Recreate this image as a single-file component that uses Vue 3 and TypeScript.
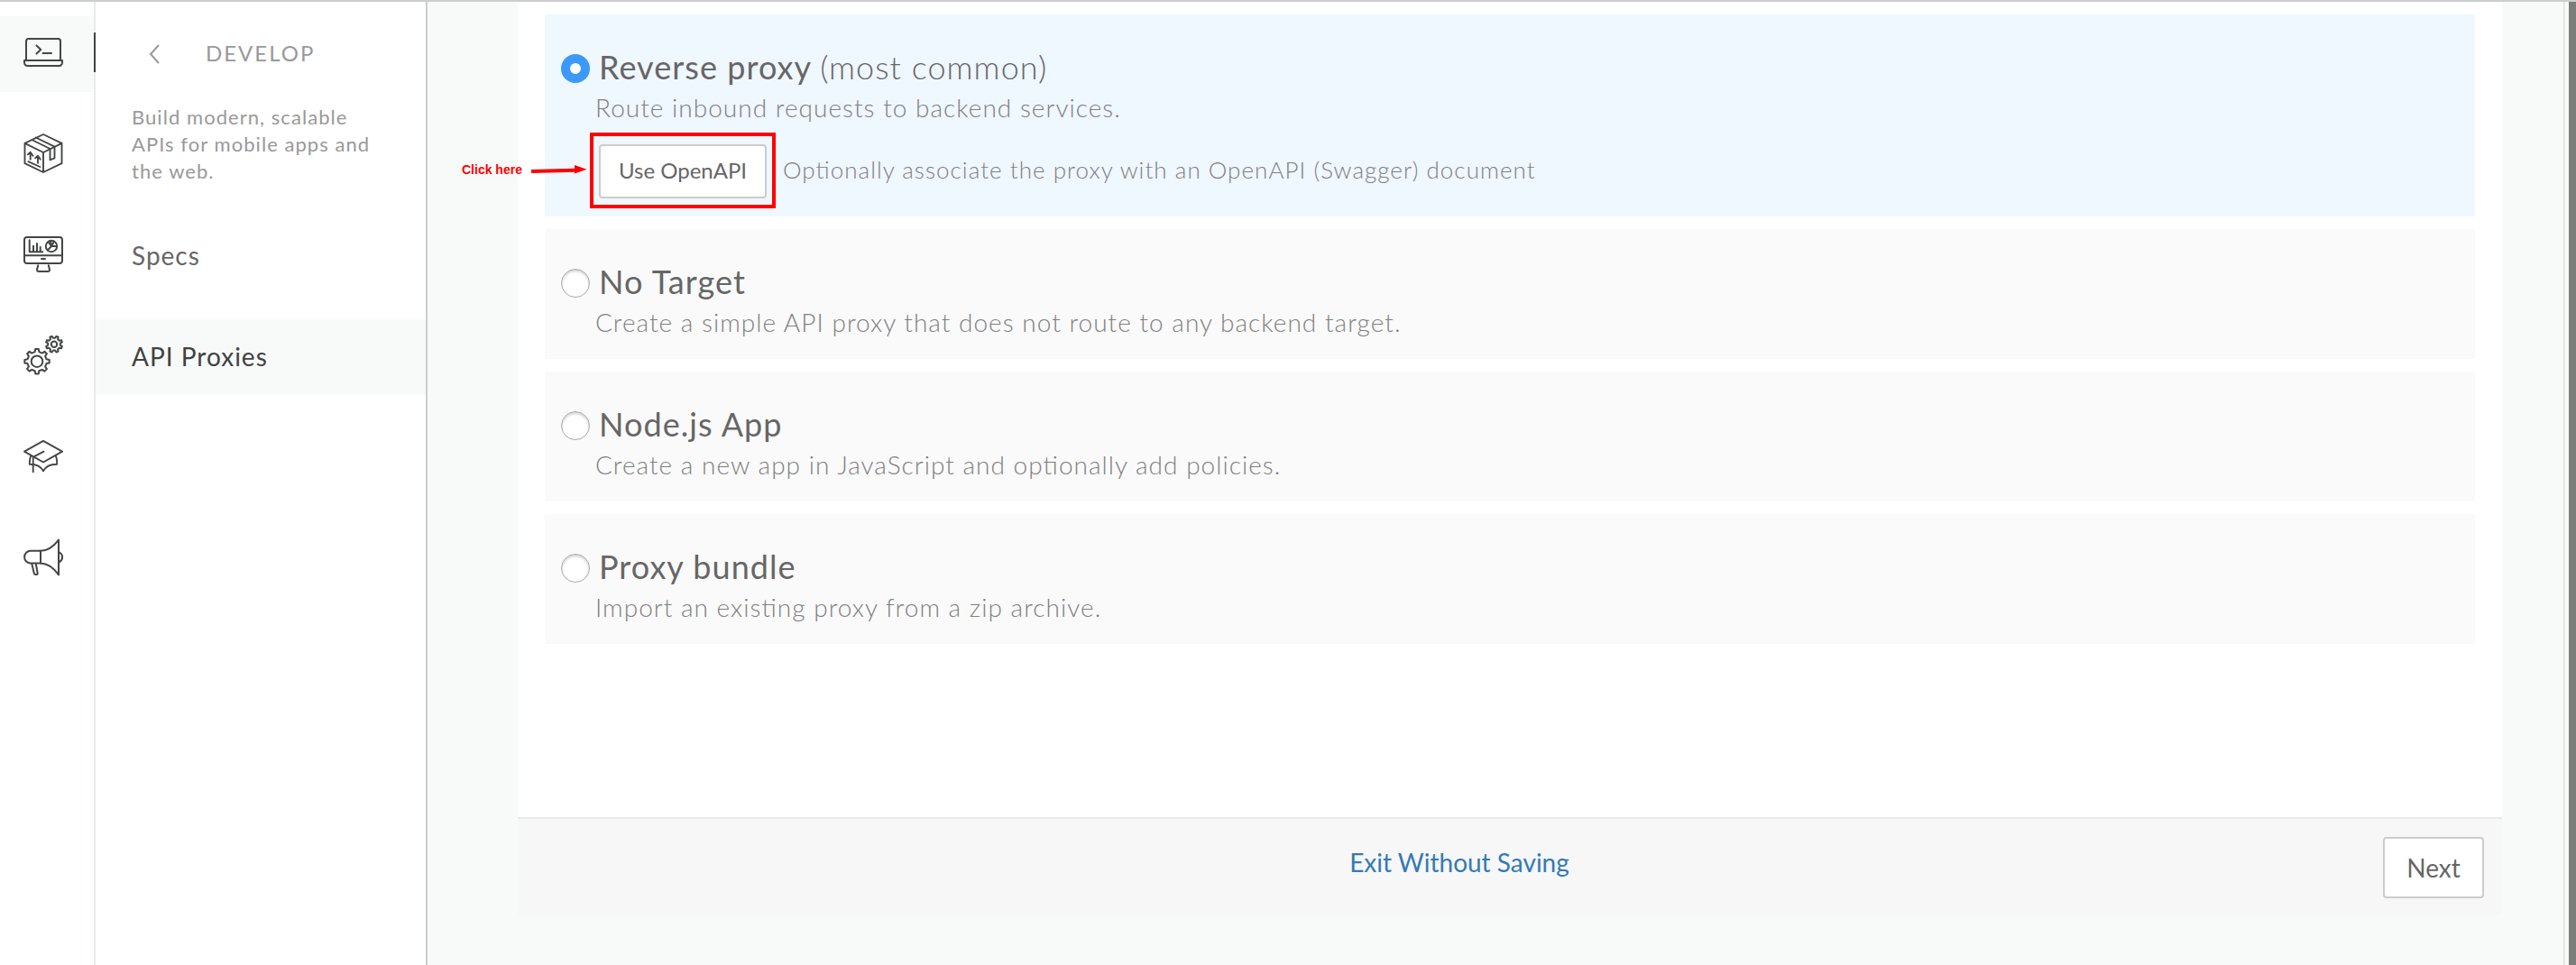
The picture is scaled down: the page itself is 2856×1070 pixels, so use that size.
<script setup lang="ts">
import { ref } from 'vue'

interface ProxyOption {
  id: string
  title: string
  note?: string
  description: string
}

const options: ProxyOption[] = [
  {
    id: 'reverse',
    title: 'Reverse proxy',
    note: '(most common)',
    description: 'Route inbound requests to backend services.',
  },
  {
    id: 'none',
    title: 'No Target',
    description: 'Create a simple API proxy that does not route to any backend target.',
  },
  {
    id: 'node',
    title: 'Node.js App',
    description: 'Create a new app in JavaScript and optionally add policies.',
  },
  {
    id: 'bundle',
    title: 'Proxy bundle',
    description: 'Import an existing proxy from a zip archive.',
  },
]
const selected = ref('reverse')

const railItems = ['develop', 'publish', 'analyze', 'admin', 'learn', 'announce']

// Outline of a cog with eight teeth
function gearPath(cx: number, cy: number, outer: number, root: number, turn: number): string {
  const points: string[] = []
  const teeth = 8
  for (let i = 0; i < teeth; i++) {
    const mid = ((i + turn) * 2 * Math.PI) / teeth - Math.PI / 2
    const spots: [number, number][] = [
      [-0.22, root],
      [-0.13, outer],
      [0.13, outer],
      [0.22, root],
    ]
    for (const [offset, r] of spots) {
      const a = mid + offset
      points.push(`${(cx + r * Math.cos(a)).toFixed(2)} ${(cy + r * Math.sin(a)).toFixed(2)}`)
    }
  }
  return `M${points.join('L')}Z`
}

const bigGear = gearPath(15, 28.7, 13.8, 10.8, 0)
const smallGear = gearPath(34, 9.7, 9.2, 7, 0.5)
</script>

<template>
  <div class="app">
    <nav class="rail">
      <div v-for="item in railItems" :key="item" class="rail-item" :class="{ active: item === 'develop' }">
        <svg class="icon" width="44" height="44" viewBox="0 0 44 44">
          <g v-if="item === 'develop'">
            <path d="M3 30.5V9.5A2.5 2.5 0 0 1 5.500 7h33A2.500 2.500 0 0 1 41 9.500V30.500" />
            <path d="M1 31h42v2.500a3.500 3.500 0 0 1-3.500 3.500h-35A3.500 3.500 0 0 1 1 33.500z" />
            <path d="M14.500 14.500l4.700 4.500-4.700 4.500M21.500 23h9.500" />
          </g>
          <g v-else-if="item === 'publish'" class="thin">
            <path d="M22 1l20.500 9.800v22.400L22 43 1.500 33.200V10.800zM1.500 10.800L22 21l20.500-10.200M22 21v22" />
            <path d="M9.300 7L29.500 17v12.300l5-2V14.700L13.800 4.500" />
            <path d="M7.700 21v7.700M5 23.300l2.700-2.500 2.900 4M16 25v7.700M13.200 27.300l2.800-2.500 2.800 4M5.300 31.200l13 5.800" />
          </g>
          <g v-else-if="item === 'analyze'">
            <rect x="1" y="3" width="42" height="29" rx="3" />
            <path d="M1 23.300h42M20 27h4M16.200 34.200L15 39q0 2 2 2h10q2 0 2-2l-1.200-4.800" />
            <path d="M6.700 6.300v13h14.600M11 19v-6.300M15 19V10M18.700 19v-5" />
            <circle cx="31" cy="13" r="6.200" />
            <path d="M37 13h-6l-4.200 4.500M31 13l-1-6M31 13l-3-4M31 13l3-5.300" />
          </g>
          <g v-else-if="item === 'admin'">
            <path :d="bigGear" />
            <circle cx="15" cy="28.700" r="6.300" />
            <path :d="smallGear" />
            <circle cx="34" cy="9.700" r="3.200" />
          </g>
          <g v-else-if="item === 'learn'" class="thin">
            <path d="M22 4.900l21 11.800-21 11.800L1 16.700z" />
            <path d="M22.500 16.700L10.700 22.900v16.300" />
            <path d="M8.300 21.200Q6.700 25 6.800 30.700 18 30.500 22 38.300 26 30.500 37.200 30.700 37.300 25 35.700 21.200" />
          </g>
          <g v-else>
            <path d="M19 14.800H8A6.900 6.900 0 0 0 8 28.600H19z" />
            <path d="M19 14.800Q30 14.500 39 2.600V41.400Q30 29 19 28.600" />
            <path d="M40 16.500Q43.200 18.500 43.200 21.800T40 27.200" />
            <path d="M9.300 29.300l2.500 10.400q.3 1.300 1.500 1.300h1.300q1.300 0 1.100-1.300L13.800 29.300" />
          </g>
        </svg>
      </div>
    </nav>

    <aside class="side">
      <header class="side-head">
        <svg class="back" width="14" height="24" viewBox="0 0 14 24">
          <path d="M11 2L2 12l9 10" />
        </svg>
        <span class="side-title">DEVELOP</span>
      </header>
      <p class="side-text">Build modern, scalable APIs for mobile apps and the web.</p>
      <a class="side-link">Specs</a>
      <a class="side-link current">API Proxies</a>
    </aside>

    <main class="main">
      <section class="card">
        <div class="options">
          <div
            v-for="option in options"
            :key="option.id"
            class="option"
            :class="{ selected: selected === option.id }"
            @click="selected = option.id"
          >
            <div class="option-head">
              <span class="radio" :class="{ on: selected === option.id }"></span>
              <span class="option-title">{{ option.title }}</span>
              <span v-if="option.note" class="option-note">{{ option.note }}</span>
            </div>
            <p class="option-text">{{ option.description }}</p>
            <div v-if="option.id === 'reverse'" class="openapi">
              <button class="btn small">Use OpenAPI</button>
              <span class="openapi-text">Optionally associate the proxy with an OpenAPI (Swagger) document</span>
              <div class="highlight"></div>
              <div class="callout">
                <span>Click here</span>
                <svg width="62" height="14" viewBox="0 0 62 14">
                  <path d="M0 6.900L48 5.800V2L61.500 6.700 48 11.600V9.700L0 10.900z" />
                </svg>
              </div>
            </div>
          </div>
        </div>
        <footer class="foot">
          <a class="exit">Exit Without Saving</a>
          <button class="btn">Next</button>
        </footer>
      </section>
    </main>
    <div class="gutter"></div>
    <div class="edge"></div>
  </div>
</template>

<style>
body {
  margin: 0;
  background: #f8faf9;
}
</style>

<style scoped>
.app {
  display: flex;
  box-sizing: border-box;
  width: 2856px;
  height: 1070px;
  border-top: 2px solid #cccecd;
  background: #f8faf9;
  font-family: Lato, Carlito, "Liberation Sans", sans-serif;
  color: #666;
  overflow: hidden;
}

.rail {
  display: flex;
  flex-direction: column;
  gap: 28px;
  box-sizing: border-box;
  width: 106px;
  padding-top: 16px;
  border-right: 2px solid #e9ebea;
  background: #fff;
}

.rail-item {
  position: relative;
  display: flex;
  box-sizing: border-box;
  height: 84px;
  padding: 18px 0 0 26px;
}

.rail-item.active {
  background: #f8faf9;
}

.rail-item.active::after {
  content: "";
  position: absolute;
  top: 18px;
  right: -2px;
  width: 2px;
  height: 44px;
  background: #404241;
}

.icon {
  fill: none;
  stroke: #444645;
  stroke-width: 2;
  stroke-linejoin: round;
  stroke-linecap: round;
}

.thin {
  stroke-width: 1.9;
}

.side {
  box-sizing: border-box;
  width: 368px;
  border-right: 2px solid #cccecd;
  background: #fff;
}

.side-head {
  display: flex;
  align-items: center;
  height: 32px;
  margin-top: 41px;
  padding-left: 59px;
}

.back {
  margin-top: 2px;
  fill: none;
  stroke: #999;
  stroke-width: 2;
}

.side-title {
  margin-left: 49px;
  font-size: 24px;
  line-height: 32px;
  letter-spacing: 2px;
  color: #999;
}

.side-text {
  width: 280px;
  margin: 40px 0 37px 40px;
  font-size: 22px;
  line-height: 30px;
  letter-spacing: 1.05px;
  color: #999;
}

.side-link {
  display: block;
  height: 84px;
  margin-bottom: 28px;
  padding-left: 40px;
  font-size: 28px;
  line-height: 83px;
  letter-spacing: 1px;
  color: #666;
}

.side-link.current {
  background: #f8faf9;
  color: #404241;
}

.main {
  flex: 1;
  padding: 0 68px 0 100px;
}

.card {
  display: flex;
  flex-direction: column;
  height: 1013px;
  background: #fff;
}

.options {
  display: flex;
  flex: 1;
  flex-direction: column;
  gap: 14px;
  padding: 14px 30px 0;
}

.option {
  box-sizing: border-box;
  height: 144px;
  padding: 36px 0 0 18px;
  background: #fafafa;
}

.option.selected {
  height: 224px;
  background: #eff7ff;
}

.option-head {
  display: flex;
  align-items: center;
  height: 44px;
  font-size: 36px;
  line-height: 44px;
  letter-spacing: 1.05px;
}

.radio {
  box-sizing: border-box;
  width: 32px;
  height: 32px;
  margin: 4px 10px 0 0;
  border: 1px solid #aaa;
  border-radius: 50%;
  background: #fff;
  box-shadow: inset 0 2px 3px rgba(0, 0, 0, 0.18);
}

.radio.on {
  border: 10.5px solid #3b99fc;
  box-shadow: none;
}

.option-note {
  margin-left: 9px;
  font-weight: 300;
}

.option-text {
  margin: 3px 0 0 38px;
  font-size: 28px;
  font-weight: 300;
  line-height: 40px;
  letter-spacing: 1.03px;
  font-feature-settings: "liga" 1;
  color: #808080;
}

.openapi {
  position: relative;
  display: flex;
  align-items: center;
  margin: 21px 0 0 42px;
}

.openapi-text {
  margin-left: 18px;
  padding-bottom: 4px;
  font-size: 26px;
  font-weight: 300;
  letter-spacing: 1.03px;
  font-feature-settings: "liga" 1;
  color: #808080;
}

.highlight {
  position: absolute;
  top: -13px;
  left: -10px;
  box-sizing: border-box;
  width: 206px;
  height: 84px;
  border: 4px solid #f00;
}

.callout {
  position: absolute;
  top: 17px;
  left: -152px;
  display: flex;
  align-items: center;
  font: bold 14px/22px "Liberation Sans", Arial, sans-serif;
  color: #f00;
  white-space: nowrap;
}

.callout svg {
  margin-left: 10px;
  fill: #f00;
}

.btn {
  box-sizing: border-box;
  width: 112px;
  height: 68px;
  padding: 0 0 1px;
  border: 2px solid #ccc;
  border-radius: 4px;
  background: #fff;
  font-family: inherit;
  font-size: 28px;
  color: #666;
}

.btn.small {
  width: 186px;
  height: 60px;
  padding-bottom: 4px;
  font-size: 24px;
}

.foot {
  display: flex;
  box-sizing: border-box;
  height: 109px;
  padding: 20px 20px 0;
  border-top: 2px solid #e9e9e9;
  background: #f7f7f7;
}

.exit {
  flex: 1;
  padding-top: 8px;
  font-size: 28px;
  line-height: 40px;
  text-align: center;
  color: #337ab7;
}

.gutter {
  box-sizing: border-box;
  width: 6px;
  border-left: 1px solid #ddd;
  background: #fafafa;
  box-shadow: inset 1px 0 #ebebeb;
}

.edge {
  width: 8px;
  background: #7c7e7b;
}
</style>
